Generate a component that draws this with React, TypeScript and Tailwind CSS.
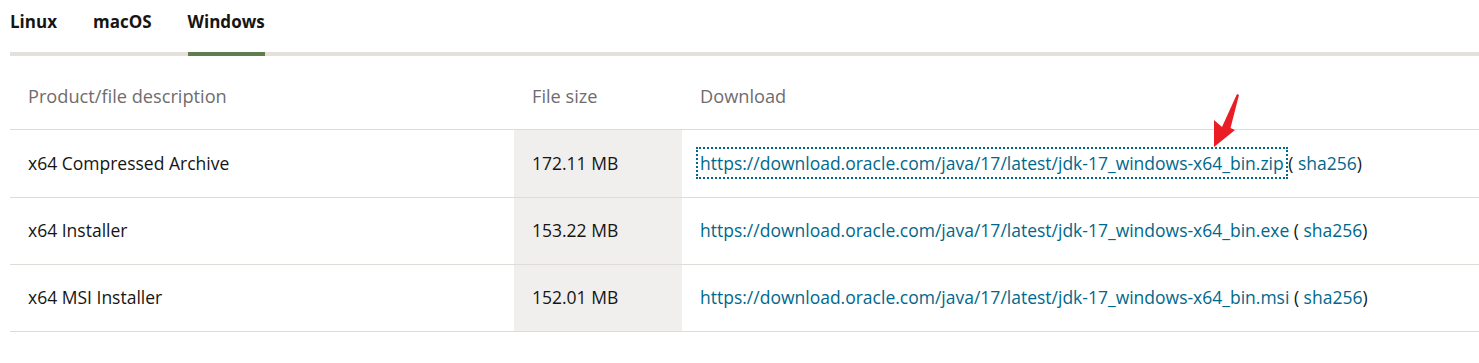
import React from "react";

const rows = [
  { desc: "x64 Compressed Archive", size: "172.11 MB", url: "https://download.oracle.com/java/17/latest/jdk-17_windows-x64_bin.zip", focus: true },
  { desc: "x64 Installer", size: "153.22 MB", url: "https://download.oracle.com/java/17/latest/jdk-17_windows-x64_bin.exe", focus: false },
  { desc: "x64 MSI Installer", size: "152.01 MB", url: "https://download.oracle.com/java/17/latest/jdk-17_windows-x64_bin.msi", focus: false },
];

export default function App() {
  return (
    <div className="relative w-[1479px] h-[363px] bg-white pl-[10px] text-[#161513]" style={{ fontFamily: '"Open Sans", "Noto Sans", sans-serif' }}>
      <div className="flex gap-[36px] border-b-4 border-[#e4e1dd] h-[56px]">
        {["Linux", "macOS", "Windows"].map((t) => (
          <div
            key={t}
            className={
              "pt-[10px] text-[17px] font-bold leading-[24px] -mb-[4px] " +
              (t === "Windows" ? "border-b-4 border-[#5f7d4f]" : "")
            }
          >
            {t}
          </div>
        ))}
      </div>
      <table className="w-[1469px] border-collapse text-[17.5px]">
        <thead>
          <tr className="border-b border-[#dfdcd8] h-[73px]">
            <th className="w-[504px] pl-[18px] pt-[8px] text-left font-normal text-[18.2px] text-[#6f6c6e]">Product/file description</th>
            <th className="w-[168px] pl-[18px] pt-[8px] text-left font-normal text-[18.2px] text-[#6f6c6e]">File size</th>
            <th className="pl-[18px] pt-[8px] text-left font-normal text-[18.2px] text-[#6f6c6e]">Download</th>
          </tr>
        </thead>
        <tbody>
          {rows.map((r, i) => (
            <tr key={r.desc} className={"border-b border-[#dfdcd8] " + (i === 0 ? "h-[68px]" : "h-[67px]")}>
              <td className="pl-[18px]">{r.desc}</td>
              <td className="pl-[18px] bg-[#f1efed]">{r.size}</td>
              <td className="pl-[18px] text-[#00688c]">
                <span className={r.focus ? "outline-2 outline-dotted outline-[#00688c] outline-offset-[2px]" : ""}>{r.url}</span>
                {" "}
                <span className="text-[#161513]">(</span> sha256<span className="text-[#161513]">)</span>
              </td>
            </tr>
          ))}
        </tbody>
      </table>
      <svg className="absolute left-0 top-0 pointer-events-none" width="1479" height="363">
        <polygon points="1239,95 1230.5,128 1235,130 1214,147 1214,120 1222,127 1237,94" fill="#ea1c24" />
      </svg>
    </div>
  );
}
